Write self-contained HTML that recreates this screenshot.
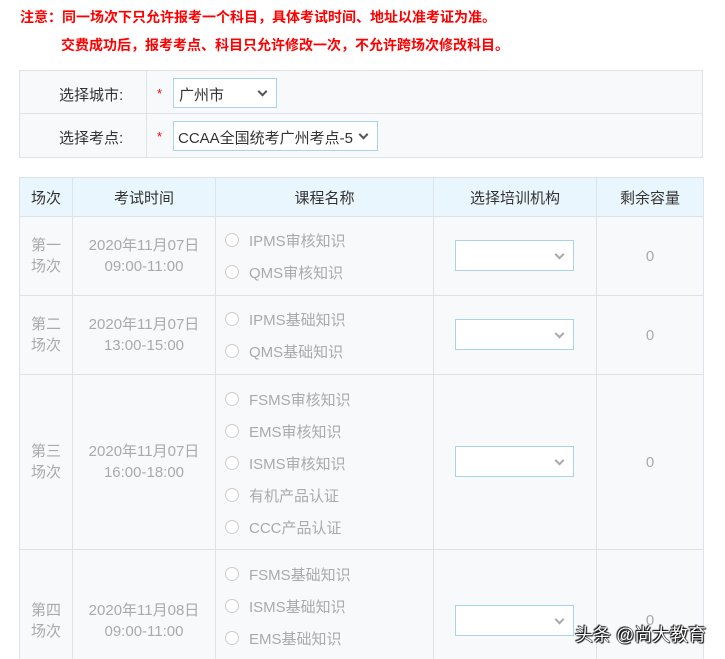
<!DOCTYPE html><html><head><meta charset="utf-8"><style>
html,body{margin:0;width:725px;height:659px;overflow:hidden}
body{background:#fff;font-family:"Liberation Sans","Noto Sans CJK SC",sans-serif;position:relative}
.a{position:absolute}
.red{color:#f00;font-weight:bold;font-size:14px;white-space:nowrap}
.c{position:absolute;border:1px solid #dde3e8;box-sizing:border-box;background:#f8f9fb;font-size:15px;color:#999}
.h{background:#eaf6fd;color:#333;display:flex;align-items:center;justify-content:center}
.sel{position:absolute;border:1px solid #a9d4e6;background:#fff;box-sizing:border-box}
.sel:after{content:"";position:absolute;right:10px;top:50%;width:5px;height:5px;border-right:2px solid #555;border-bottom:2px solid #555;transform:translateY(-70%) rotate(45deg)}
.g:after{border-color:#aaa}
.r{position:absolute;font-size:15px;color:#aaa;white-space:nowrap}
.r:before{content:"";display:inline-block;width:12px;height:12px;border:1px solid #ccc;border-radius:50%;background:#fff;margin-right:10px;vertical-align:-1px}
.t{display:flex;align-items:center;justify-content:center;text-align:center;line-height:21px;color:#aaa}
.b{border-bottom:none;padding-top:32px}
</style></head><body>
<div class="a red" style="left:20px;top:7px">注意：同一场次下只允许报考一个科目，具体考试时间、地址以准考证为准。</div>
<div class="a red" style="left:61px;top:35px">交费成功后，报考考点、科目只允许修改一次，不允许跨场次修改科目。</div>
<div class="c" style="left:19px;top:70px;width:684px;height:44px"></div>
<div class="c" style="left:19px;top:113px;width:684px;height:45px"></div>
<div class="a" style="left:146px;top:71px;width:1px;height:86px;background:#dde3e8"></div>
<div class="a" style="left:59px;top:84px;font-size:15px;color:#333">选择城市:</div>
<div class="a" style="left:59px;top:127px;font-size:15px;color:#333">选择考点:</div>
<div class="a" style="left:157px;top:86px;color:#f00;font-size:13px">*</div>
<div class="a" style="left:157px;top:129px;color:#f00;font-size:13px">*</div>
<div class="sel" style="left:173px;top:78px;width:104px;height:30px"><span class="a" style="left:5px;top:5px;font-size:15px;color:#333">广州市</span></div>
<div class="sel" style="left:173px;top:121px;width:205px;height:30px;overflow:hidden"><span class="a" style="left:4px;top:5px;font-size:15px;color:#333;white-space:nowrap">CCAA全国统考广州考点-5</span></div>

<div class="c h" style="left:19px;top:177px;width:54px;height:40px">场次</div>
<div class="c h" style="left:72px;top:177px;width:144px;height:40px">考试时间</div>
<div class="c h" style="left:215px;top:177px;width:219px;height:40px">课程名称</div>
<div class="c h" style="left:433px;top:177px;width:164px;height:40px">选择培训机构</div>
<div class="c h" style="left:596px;top:177px;width:108px;height:40px">剩余容量</div>

<div class="c t" style="left:19px;top:216px;width:54px;height:80px">第一<br>场次</div>
<div class="c t" style="left:72px;top:216px;width:144px;height:80px">2020年11月07日<br>09:00-11:00</div>
<div class="c" style="left:215px;top:216px;width:219px;height:80px"></div>
<div class="c" style="left:433px;top:216px;width:164px;height:80px"></div>
<div class="c t" style="left:596px;top:216px;width:108px;height:80px">0</div>

<div class="c t" style="left:19px;top:295px;width:54px;height:80px">第二<br>场次</div>
<div class="c t" style="left:72px;top:295px;width:144px;height:80px">2020年11月07日<br>13:00-15:00</div>
<div class="c" style="left:215px;top:295px;width:219px;height:80px"></div>
<div class="c" style="left:433px;top:295px;width:164px;height:80px"></div>
<div class="c t" style="left:596px;top:295px;width:108px;height:80px">0</div>

<div class="c t" style="left:19px;top:374px;width:54px;height:176px">第三<br>场次</div>
<div class="c t" style="left:72px;top:374px;width:144px;height:176px">2020年11月07日<br>16:00-18:00</div>
<div class="c" style="left:215px;top:374px;width:219px;height:176px"></div>
<div class="c" style="left:433px;top:374px;width:164px;height:176px"></div>
<div class="c t" style="left:596px;top:374px;width:108px;height:176px">0</div>

<div class="c t b" style="left:19px;top:549px;width:54px;height:110px">第四<br>场次</div>
<div class="c t b" style="left:72px;top:549px;width:144px;height:110px">2020年11月08日<br>09:00-11:00</div>
<div class="c b" style="left:215px;top:549px;width:219px;height:110px"></div>
<div class="c b" style="left:433px;top:549px;width:164px;height:110px"></div>
<div class="c t b" style="left:596px;top:549px;width:108px;height:110px">0</div>

<div class="r" style="left:225px;top:230px">IPMS审核知识</div>
<div class="r" style="left:225px;top:262px">QMS审核知识</div>
<div class="r" style="left:225px;top:309px">IPMS基础知识</div>
<div class="r" style="left:225px;top:341px">QMS基础知识</div>
<div class="r" style="left:225px;top:389px">FSMS审核知识</div>
<div class="r" style="left:225px;top:421px">EMS审核知识</div>
<div class="r" style="left:225px;top:453px">ISMS审核知识</div>
<div class="r" style="left:225px;top:485px">有机产品认证</div>
<div class="r" style="left:225px;top:517px">CCC产品认证</div>
<div class="r" style="left:225px;top:564px">FSMS基础知识</div>
<div class="r" style="left:225px;top:596px">ISMS基础知识</div>
<div class="r" style="left:225px;top:628px">EMS基础知识</div>

<div class="sel g" style="left:455px;top:240px;width:119px;height:31px"></div>
<div class="sel g" style="left:455px;top:319px;width:119px;height:31px"></div>
<div class="sel g" style="left:455px;top:446px;width:119px;height:31px"></div>
<div class="sel g" style="left:455px;top:605px;width:119px;height:31px"></div>

<div class="a" style="left:575px;top:621px;font-size:18px;color:#fff;white-space:nowrap;text-shadow:0 0 1px #000,0 0 1px #000,1px 1px 1px #000,-1px -1px 1px #000">头条 @尚大教育</div>
</body></html>
